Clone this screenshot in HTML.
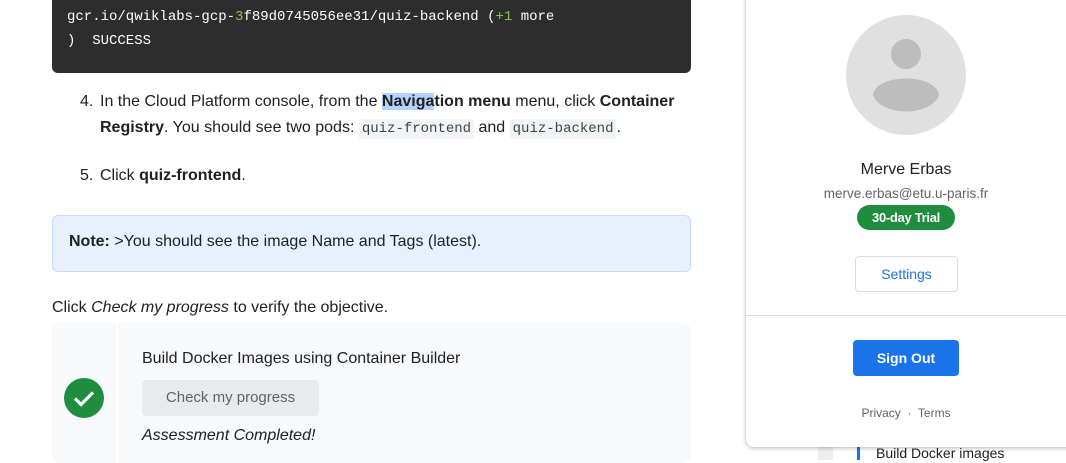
<!DOCTYPE html>
<html><head><style>
*{margin:0;padding:0;box-sizing:border-box}
body{width:1066px;height:455px;overflow:hidden;background:#fff;font-family:"Liberation Sans",Roboto,sans-serif;color:#202124;position:relative}
.abs{position:absolute}
.code{left:52px;top:-10px;width:639px;height:83px;background:#2d2d2d;border-radius:6px;font-family:"Liberation Mono",monospace;font-size:14px;color:#fff;padding:15px 0 0 15px;line-height:24px}
.g{color:#8bc34a}
.t{font-size:16px;line-height:26px}
.cd{font-family:"Liberation Mono",monospace;font-size:14px;background:#f1f3f4;padding:2px 3px;border-radius:2px;color:#37474f}
b{font-weight:bold}
</style></head><body>
<div class="abs code">gcr.io/qwiklabs-gcp-<span class="g">3</span>f89d0745056ee31/quiz-backend (<span class="g">+1</span> more<br>)&nbsp; SUCCESS</div>
<div class="abs t" style="left:80px;top:89px">4.</div>
<div class="abs t" style="left:100px;top:89px;width:600px">In the Cloud Platform console, from the <b style="background:#b3d4fc">Naviga</b><b>tion menu</b> menu, click <b>Container Registry</b>. You should see two pods: <span class="cd">quiz-frontend</span> and <span class="cd">quiz-backend</span>.</div>
<div class="abs t" style="left:80px;top:163px">5.</div>
<div class="abs t" style="left:100px;top:163px">Click <b>quiz-frontend</b>.</div>
<div class="abs" style="left:52px;top:215px;width:639px;height:57px;background:#e8f0fe;border:1px solid #c6dafc;border-radius:6px;font-size:16px;padding:17px 0 0 16px"><b>Note:</b> &gt;You should see the image Name and Tags (latest).</div>
<div class="abs t" style="left:52px;top:295px">Click <i>Check my progress</i> to verify the objective.</div>
<div class="abs" style="left:52px;top:323px;width:639px;height:140px;background:#f8f9fa;border-radius:8px"></div>
<div class="abs" style="left:116px;top:323px;width:2px;height:140px;background:#fff"></div>
<svg class="abs" style="left:64px;top:378px" width="40" height="40" viewBox="0 0 40 40"><circle cx="20" cy="20" r="20" fill="#1e8e3e"/><path d="M11 20.5l6 6 12-12" stroke="#fff" stroke-width="3.2" fill="none"/></svg>
<div class="abs t" style="left:142px;top:346px">Build Docker Images using Container Builder</div>
<div class="abs" style="left:142px;top:380px;width:177px;height:36px;background:#e8eaed;border-radius:4px;color:#5f6368;font-size:15px;text-align:center;line-height:36px">Check my progress</div>
<div class="abs t" style="left:142px;top:423px"><i>Assessment Completed!</i></div>
<div class="abs" style="left:818px;top:440px;width:15px;height:20px;background:#eee"></div>
<div class="abs" style="left:857px;top:440px;width:3px;height:20px;background:#1a73e8"></div>
<div class="abs" style="left:876px;top:445px;font-size:14px">Build Docker images</div>
<div class="abs" style="left:746px;top:-10px;width:330px;height:457px;background:#fff;border-radius:8px;box-shadow:0 1px 4px rgba(0,0,0,.3)"></div>
<svg class="abs" style="left:846px;top:15px" width="120" height="120" viewBox="0 0 120 120"><circle cx="60" cy="60" r="60" fill="#e0e0e0"/><circle cx="60" cy="39" r="15" fill="#bdbdbd"/><path d="M27 80 C30 58 90 58 93 80 C85 102 35 102 27 80Z" fill="#bdbdbd"/></svg>
<div class="abs" style="left:746px;width:320px;top:161px;text-align:center;font-size:16px;color:#202124">Merve Erbas</div>
<div class="abs" style="left:746px;width:320px;top:186px;text-align:center;font-size:13.5px;color:#5f6368">merve.erbas@etu.u-paris.fr</div>
<div class="abs" style="left:857px;top:205px;width:98px;height:25px;border-radius:13px;background:#1e8e3e;color:#fff;font-size:13px;font-weight:bold;text-align:center;line-height:25px;letter-spacing:-.3px">30-day Trial</div>
<div class="abs" style="left:855px;top:256px;width:103px;height:36px;border:1px solid #dadce0;border-radius:4px;color:#1a73e8;font-size:14px;text-align:center;line-height:34px">Settings</div>
<div class="abs" style="left:746px;top:315px;width:320px;height:1px;background:#dadce0"></div>
<div class="abs" style="left:853px;top:340px;width:106px;height:36px;background:#1a73e8;border-radius:4px;color:#fff;font-size:14px;font-weight:bold;text-align:center;line-height:36px">Sign Out</div>
<div class="abs" style="left:746px;width:320px;top:406px;text-align:center;font-size:12px;color:#5f6368">Privacy &nbsp;·&nbsp; Terms</div>
</body></html>
